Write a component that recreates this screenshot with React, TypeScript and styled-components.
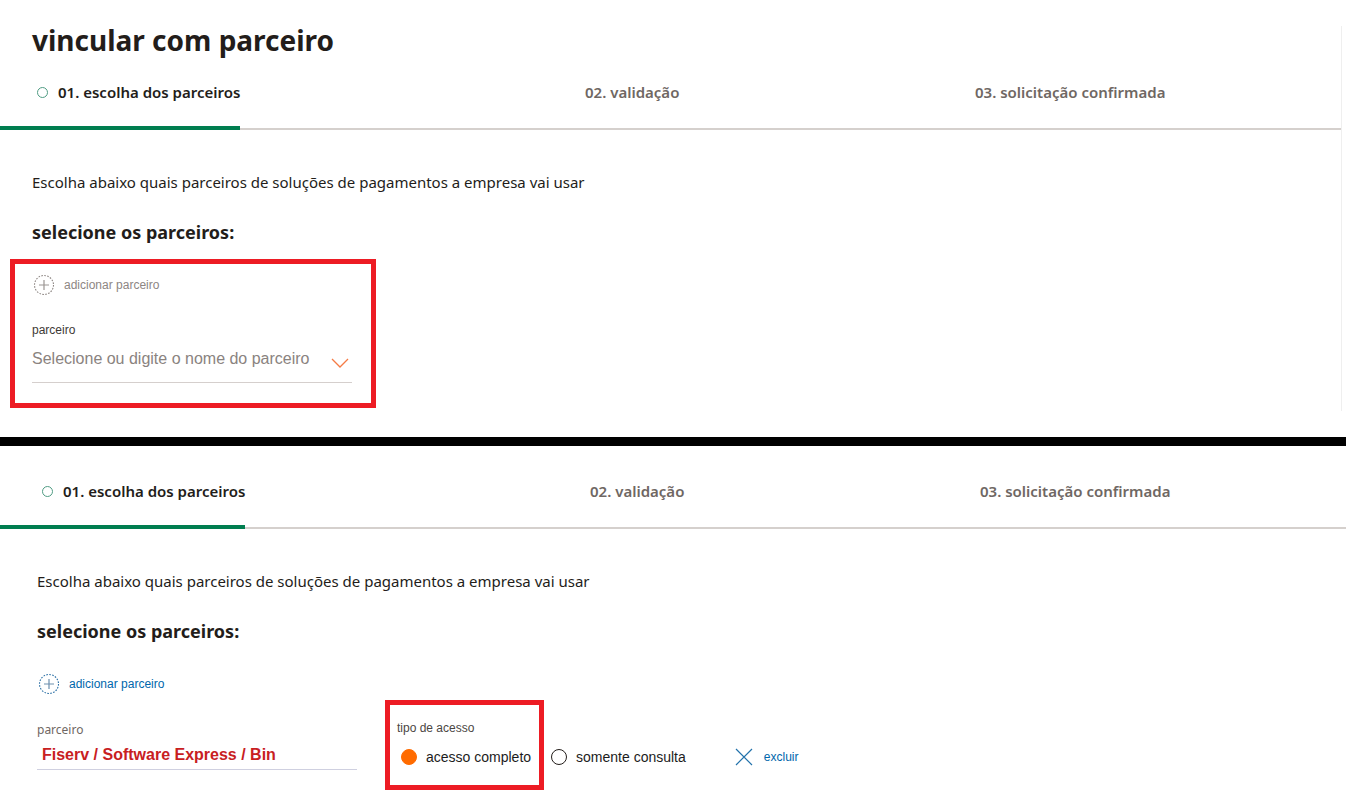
import React from 'react';
import styled, { createGlobalStyle } from 'styled-components';

const brand = '"Noto Sans", "Open Sans", sans-serif';
const plain = '"Liberation Sans", Arial, sans-serif';

const GlobalStyle = createGlobalStyle`
  *, *::before, *::after { box-sizing: border-box; }
  body { margin: 0; background: #fff; color: #231d1a; font-family: ${brand}; }
  button, input { font: inherit; color: inherit; background: none; border: 0; padding: 0; margin: 0; border-radius: 0; }
  button { cursor: pointer; }
  h1, h2, p, ol { margin: 0; padding: 0; }
`;

const Panel = styled.section<{ $framed?: boolean }>`
  margin: ${p => (p.$framed ? '26px 4px 26px 0' : '0')};
  padding: ${p => (p.$framed ? '0 0 3px' : '33px 0 0')};
  border-right: ${p => (p.$framed ? '1px solid #efefef' : '0')};
`;

const Divider = styled.hr`
  height: 9px;
  margin: 0;
  border: 0;
  background: #000;
`;

const Title = styled.h1`
  padding-left: 32px;
  margin-bottom: 26px;
  font-size: 28px;
  line-height: 28px;
  font-weight: 700;
`;

const Steps = styled.ol<{ $inset: number }>`
  display: grid;
  grid-template-columns: ${p => 585 + p.$inset}fr 390fr 366fr;
  list-style: none;
  height: 50px;
  border-bottom: 2px solid #d5d0cd;
`;

const Step = styled.li<{ $active?: boolean; $inset?: number }>`
  display: flex;
  align-items: flex-start;
  justify-self: start;
  gap: 10px;
  height: 50px;
  padding-left: ${p => (p.$active ? 37 + (p.$inset ?? 0) : 0)}px;
  border-bottom: ${p => (p.$active ? '4px solid #007e50' : '0')};
  color: ${p => (p.$active ? '#231d1a' : '#6f6763')};
  font-size: 15px;
  line-height: 24px;
  font-weight: 600;
  white-space: nowrap;
`;

const StepDot = styled.span`
  width: 11px;
  height: 11px;
  margin-top: 7px;
  border: 1px solid #4f9c83;
  border-radius: 50%;
`;

const Intro = styled.div<{ $inset: number }>`
  padding: 40px 32px 0 ${p => 32 + p.$inset}px;
`;

const Lead = styled.p`
  font-size: 15px;
  line-height: 24px;
`;

const Heading = styled.h2`
  margin-top: 26px;
  font-size: 18px;
  line-height: 24px;
  font-weight: 700;
`;

const HighlightFrame = styled.div`
  width: 366px;
  margin: 15px 0 0 10px;
  padding: 9px 17px 20px;
  border: 5px solid #ed1c24;
`;

const AddButton = styled.button<{ $muted?: boolean }>`
  display: flex;
  align-items: center;
  gap: 8px;
  font-family: ${plain};
  font-size: 12px;
  line-height: 24px;
  color: ${p => (p.$muted ? '#8d8683' : '#0067ac')};
`;

const FieldLabel = styled.label`
  display: block;
  font-family: ${plain};
  font-size: 12px;
  line-height: 16px;
  color: #3e3936;
`;

const SelectField = styled.div`
  width: 320px;
  margin-top: 25px;
`;

const Combo = styled.div`
  display: flex;
  align-items: flex-start;
  height: 45px;
  border-bottom: 1px solid #d5cfcd;
`;

const ComboInput = styled.input`
  flex: 1;
  min-width: 0;
  height: 24px;
  margin-top: 9px;
  font-family: ${plain};
  font-size: 16px;
  line-height: 24px;
  outline: 0;
  &::placeholder { color: #8a8380; opacity: 1; }
`;

const ComboToggle = styled.button`
  display: flex;
  margin: 20px 3px 0 0;
`;

const PartnerArea = styled.div`
  padding: 29px 32px 24px 37px;
`;

const PartnerRow = styled.div`
  display: flex;
  align-items: flex-start;
  margin-top: 24px;
`;

const PartnerField = styled.div`
  width: 320px;
  margin-right: 40px;
  padding-top: 2px;
`;

const PartnerLabel = styled.label`
  display: block;
  font-size: 12px;
  line-height: 16px;
  color: #6f6763;
`;

const PartnerInput = styled.input`
  display: block;
  width: 100%;
  height: 32px;
  padding: 3px 5px 0;
  border-bottom: 1px solid #cfd0e0;
  font-family: ${plain};
  font-size: 16px;
  font-weight: 700;
  color: #c8201f;
  outline: 0;
`;

const AccessArea = styled.div`
  position: relative;
`;

const Access = styled.fieldset`
  min-width: 0;
  margin: 0;
  padding: 0;
  border: 0;
  font-family: ${plain};
`;

const AccessLegend = styled.legend`
  padding: 0;
  font-size: 12px;
  line-height: 16px;
  color: #4b4643;
`;

const AccessHighlight = styled.div`
  position: absolute;
  top: -20px;
  left: -12px;
  width: 159px;
  height: 90px;
  border: 5px solid #ed1c24;
  pointer-events: none;
`;

const Options = styled.div`
  display: flex;
  gap: 20px;
  padding: 11px 0 0 4px;
`;

const Option = styled.label`
  display: flex;
  align-items: center;
  gap: 9px;
  font-size: 14px;
  line-height: 20px;
  color: #1c1c1c;
  white-space: nowrap;
`;

const Radio = styled.input`
  appearance: none;
  width: 16px;
  height: 16px;
  border: 1px solid #231d1a;
  border-radius: 50%;
  &:checked { border-color: #ff6b00; background: #ff6b00; }
`;

const RemoveButton = styled.button`
  display: flex;
  align-items: center;
  gap: 11px;
  margin: 27px 0 0 49px;
  font-family: ${plain};
  font-size: 12px;
  line-height: 20px;
  color: #0067ac;
`;

const PlusIcon = ({ ring, cross }: { ring: string; cross: string }) => (
  <svg width="24" height="24" viewBox="0 0 24 24" fill="none" aria-hidden="true">
    <circle cx="12" cy="12" r="9.5" stroke={ring} strokeWidth="1.1" strokeDasharray="1.6 1.384" />
    <path d="M12 7v10M7 12h10" stroke={cross} strokeWidth="1.2" />
  </svg>
);

const ChevronIcon = () => (
  <svg width="18" height="10" viewBox="0 0 18 10" fill="none" aria-hidden="true">
    <path d="M1 1l8 8 8-8" stroke="#f57b45" strokeWidth="1.3" />
  </svg>
);

const CloseIcon = () => (
  <svg width="18" height="18" viewBox="0 0 18 18" fill="none" aria-hidden="true">
    <path d="M1 1l16 16M17 1L1 17" stroke="#2272ab" strokeWidth="1.2" />
  </svg>
);

const Stepper = ({ inset = 0 }: { inset?: number }) => (
  <Steps $inset={inset}>
    <Step $active $inset={inset} aria-current="step">
      <StepDot />
      01. escolha dos parceiros
    </Step>
    <Step>02. validação</Step>
    <Step>03. solicitação confirmada</Step>
  </Steps>
);

const Introduction = ({ inset = 0 }: { inset?: number }) => (
  <Intro $inset={inset}>
    <Lead>Escolha abaixo quais parceiros de soluções de pagamentos a empresa vai usar</Lead>
    <Heading>selecione os parceiros:</Heading>
  </Intro>
);

export default function App() {
  return (
    <>
      <GlobalStyle />
      <main>
        <Panel $framed>
          <Title>vincular com parceiro</Title>
          <Stepper />
          <Introduction />
          <HighlightFrame>
            <AddButton type="button" $muted>
              <PlusIcon ring="#8d8683" cross="#9c9693" />
              adicionar parceiro
            </AddButton>
            <SelectField>
              <FieldLabel htmlFor="partner-search">parceiro</FieldLabel>
              <Combo>
                <ComboInput id="partner-search" placeholder="Selecione ou digite o nome do parceiro" />
                <ComboToggle type="button" aria-label="abrir lista">
                  <ChevronIcon />
                </ComboToggle>
              </Combo>
            </SelectField>
          </HighlightFrame>
        </Panel>
        <Divider />
        <Panel>
          <Stepper inset={5} />
          <Introduction inset={5} />
          <PartnerArea>
            <AddButton type="button">
              <PlusIcon ring="#2a6fa5" cross="#6d8fae" />
              adicionar parceiro
            </AddButton>
            <PartnerRow>
              <PartnerField>
                <PartnerLabel htmlFor="partner-name">parceiro</PartnerLabel>
                <PartnerInput id="partner-name" defaultValue="Fiserv / Software Express / Bin" />
              </PartnerField>
              <AccessArea>
                <Access>
                  <AccessLegend>tipo de acesso</AccessLegend>
                  <Options>
                    <Option>
                      <Radio type="radio" name="access" defaultChecked />
                      acesso completo
                    </Option>
                    <Option>
                      <Radio type="radio" name="access" />
                      somente consulta
                    </Option>
                  </Options>
                </Access>
                <AccessHighlight />
              </AccessArea>
              <RemoveButton type="button">
                <CloseIcon />
                excluir
              </RemoveButton>
            </PartnerRow>
          </PartnerArea>
        </Panel>
      </main>
    </>
  );
}
